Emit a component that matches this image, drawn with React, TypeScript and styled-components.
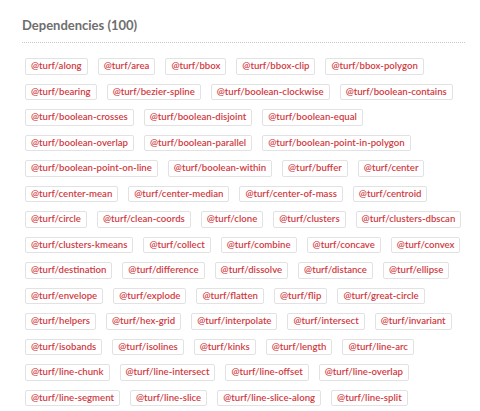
import React from "react";
import styled, { createGlobalStyle } from "styled-components";

const GlobalStyle = createGlobalStyle`
  html, body { margin: 0; padding: 0; background: #ffffff; }
  body { font-family: "Lato", "Noto Sans", sans-serif; }
`;

const deps = [
  "along", "area", "bbox", "bbox-clip", "bbox-polygon",
  "bearing", "bezier-spline", "boolean-clockwise", "boolean-contains",
  "boolean-crosses", "boolean-disjoint", "boolean-equal",
  "boolean-overlap", "boolean-parallel", "boolean-point-in-polygon",
  "boolean-point-on-line", "boolean-within", "buffer", "center",
  "center-mean", "center-median", "center-of-mass", "centroid",
  "circle", "clean-coords", "clone", "clusters", "clusters-dbscan",
  "clusters-kmeans", "collect", "combine", "concave", "convex",
  "destination", "difference", "dissolve", "distance", "ellipse",
  "envelope", "explode", "flatten", "flip", "great-circle",
  "helpers", "hex-grid", "interpolate", "intersect", "invariant",
  "isobands", "isolines", "kinks", "length", "line-arc",
  "line-chunk", "line-intersect", "line-offset", "line-overlap",
  "line-segment", "line-slice", "line-slice-along", "line-split",
];

const Section = styled.section`
  padding: 15px 15px 0 22px;
`;

const Title = styled.h2`
  margin: 0;
  padding-bottom: 7px;
  border-bottom: 1px dotted #c8c8c8;
  font-family: "Lato", sans-serif;
  font-size: 13px;
  font-weight: 700;
  line-height: 20px;
  color: #6e6e6e;
`;

const List = styled.ul`
  list-style: none;
  margin: 15px 0 0 3px;
  padding: 0;
  display: flex;
  flex-wrap: wrap;
  column-gap: 10px;
  row-gap: 9px;
`;

const Chip = styled.li`
  box-sizing: border-box;
  height: 16.5px;
  padding: 0 5px;
  border: 1px solid #e2e2e2;
  border-radius: 2px;
  background: #ffffff;
  font-family: "Lato", sans-serif;
  font-size: 9.6px;
  font-weight: 600;
  line-height: 14.5px;
  color: #cf3a3f;
  white-space: nowrap;
`;

export default function App() {
  return (
    <>
      <GlobalStyle />
      <Section>
        <Title>Dependencies (100)</Title>
        <List>
          {deps.map((d) => (
            <Chip key={d}>@turf/{d}</Chip>
          ))}
        </List>
      </Section>
    </>
  );
}
